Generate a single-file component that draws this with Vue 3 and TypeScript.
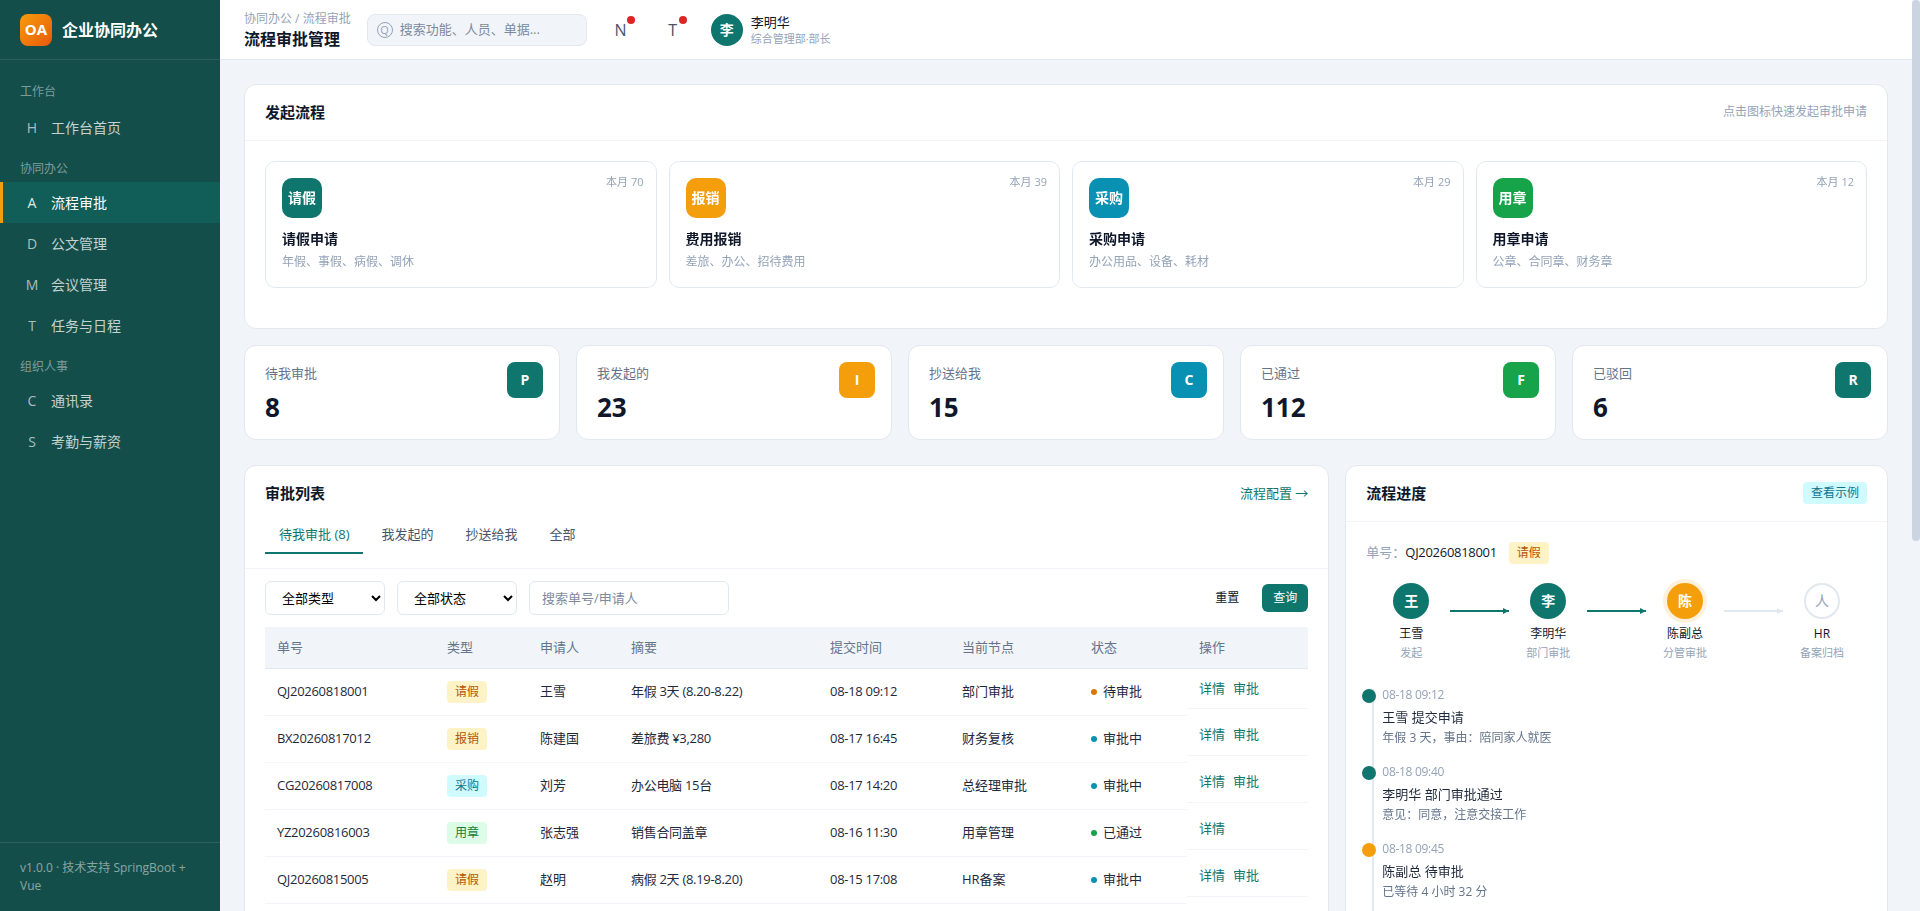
<script setup lang="ts">
import { ref } from 'vue'

type NavItem = { key: string; label: string; active?: boolean }
type NavGroup = { title: string; items: NavItem[] }
type Tone = 'amber' | 'cyan' | 'green'
type Row = {
  no: string
  type: string
  tone: Tone
  applicant: string
  summary: string
  time: string
  node: string
  status: string
  dot: 'pending' | 'running' | 'done'
  canApprove: boolean
}

const navGroups: NavGroup[] = [
  { title: '工作台', items: [{ key: 'H', label: '工作台首页' }] },
  {
    title: '协同办公',
    items: [
      { key: 'A', label: '流程审批', active: true },
      { key: 'D', label: '公文管理' },
      { key: 'M', label: '会议管理' },
      { key: 'T', label: '任务与日程' },
    ],
  },
  {
    title: '组织人事',
    items: [
      { key: 'C', label: '通讯录' },
      { key: 'S', label: '考勤与薪资' },
    ],
  },
]

const quickStarts = [
  { icon: '请假', color: 'teal', title: '请假申请', desc: '年假、事假、病假、调休', count: 70 },
  { icon: '报销', color: 'orange', title: '费用报销', desc: '差旅、办公、招待费用', count: 39 },
  { icon: '采购', color: 'blue', title: '采购申请', desc: '办公用品、设备、耗材', count: 29 },
  { icon: '用章', color: 'green', title: '用章申请', desc: '公章、合同章、财务章', count: 12 },
]

const stats = [
  { label: '待我审批', value: 8, icon: 'P', color: 'teal' },
  { label: '我发起的', value: 23, icon: 'I', color: 'orange' },
  { label: '抄送给我', value: 15, icon: 'C', color: 'blue' },
  { label: '已通过', value: 112, icon: 'F', color: 'green' },
  { label: '已驳回', value: 6, icon: 'R', color: 'teal' },
]

const tabs = ['待我审批 (8)', '我发起的', '抄送给我', '全部']
const activeTab = ref(0)

const rows: Row[] = [
  { no: 'QJ20260818001', type: '请假', tone: 'amber', applicant: '王雪', summary: '年假 3天 (8.20-8.22)', time: '08-18 09:12', node: '部门审批', status: '待审批', dot: 'pending', canApprove: true },
  { no: 'BX20260817012', type: '报销', tone: 'amber', applicant: '陈建国', summary: '差旅费 ¥3,280', time: '08-17 16:45', node: '财务复核', status: '审批中', dot: 'running', canApprove: true },
  { no: 'CG20260817008', type: '采购', tone: 'cyan', applicant: '刘芳', summary: '办公电脑 15台', time: '08-17 14:20', node: '总经理审批', status: '审批中', dot: 'running', canApprove: true },
  { no: 'YZ20260816003', type: '用章', tone: 'green', applicant: '张志强', summary: '销售合同盖章', time: '08-16 11:30', node: '用章管理', status: '已通过', dot: 'done', canApprove: false },
  { no: 'QJ20260815005', type: '请假', tone: 'amber', applicant: '赵明', summary: '病假 2天 (8.19-8.20)', time: '08-15 17:08', node: 'HR备案', status: '审批中', dot: 'running', canApprove: true },
  { no: 'BX20260815002', type: '报销', tone: 'amber', applicant: '孙丽', summary: '招待费 ¥1,460', time: '08-15 10:26', node: '部门审批', status: '待审批', dot: 'pending', canApprove: true },
  { no: 'CG20260814011', type: '采购', tone: 'cyan', applicant: '周杰', summary: '打印耗材 30件', time: '08-14 15:40', node: '行政复核', status: '审批中', dot: 'running', canApprove: true },
  { no: 'YZ20260814006', type: '用章', tone: 'green', applicant: '吴敏', summary: '采购合同盖章', time: '08-14 09:18', node: '用章管理', status: '已通过', dot: 'done', canApprove: false },
]

const flowNodes = [
  { mark: '王', name: '王雪', role: '发起', state: 'done' },
  { mark: '李', name: '李明华', role: '部门审批', state: 'done' },
  { mark: '陈', name: '陈副总', role: '分管审批', state: 'current' },
  { mark: '人', name: 'HR', role: '备案归档', state: 'todo' },
]

const timeline = [
  { time: '08-18 09:12', title: '王雪 提交申请', desc: '年假 3 天，事由：陪同家人就医', state: 'done' },
  { time: '08-18 09:40', title: '李明华 部门审批通过', desc: '意见：同意，注意交接工作', state: 'done' },
  { time: '08-18 09:45', title: '陈副总 待审批', desc: '已等待 4 小时 32 分', state: 'current' },
  { time: '待处理', title: 'HR 备案归档', desc: '等待上一节点完成', state: 'todo' },
]
</script>

<template>
  <div class="viewport">
    <div class="layout">
      <aside class="sidebar">
        <div class="brand">
          <span class="brand-logo">OA</span>
          <span class="brand-name">企业协同办公</span>
        </div>
        <nav class="nav">
          <template v-for="group in navGroups" :key="group.title">
            <div class="nav-title">{{ group.title }}</div>
            <a
              v-for="item in group.items"
              :key="item.key"
              class="nav-item"
              :class="{ active: item.active }"
            >
              <span class="nav-key">{{ item.key }}</span>
              <span>{{ item.label }}</span>
            </a>
          </template>
        </nav>
        <div class="sidebar-foot">v1.0.0 · 技术支持 SpringBoot + Vue</div>
      </aside>

      <div class="main">
        <header class="topbar">
          <div class="page-title">
            <div class="crumb">协同办公 / 流程审批</div>
            <h1>流程审批管理</h1>
          </div>
          <label class="search">
            <span class="search-icon">Q</span>
            <input type="text" placeholder="搜索功能、人员、单据..." />
          </label>
          <button class="icon-btn" type="button">N<i class="red-dot"></i></button>
          <button class="icon-btn" type="button">T<i class="red-dot"></i></button>
          <div class="user">
            <span class="avatar">李</span>
            <div>
              <div class="user-name">李明华</div>
              <div class="user-role">综合管理部·部长</div>
            </div>
          </div>
        </header>

        <main class="content">
          <section class="card">
            <div class="card-head">
              <h2>发起流程</h2>
              <span class="hint">点击图标快速发起审批申请</span>
            </div>
            <div class="quick-grid">
              <div v-for="q in quickStarts" :key="q.title" class="quick">
                <span class="quick-count">本月 {{ q.count }}</span>
                <span class="quick-icon" :class="q.color">{{ q.icon }}</span>
                <div class="quick-title">{{ q.title }}</div>
                <div class="quick-desc">{{ q.desc }}</div>
              </div>
            </div>
          </section>

          <section class="stats">
            <div v-for="s in stats" :key="s.label" class="stat">
              <div>
                <div class="stat-label">{{ s.label }}</div>
                <div class="stat-value">{{ s.value }}</div>
              </div>
              <span class="stat-icon" :class="s.color">{{ s.icon }}</span>
            </div>
          </section>

          <div class="columns">
            <section class="card">
              <div class="list-head">
                <div class="list-title">
                  <h2>审批列表</h2>
                  <a class="link">流程配置 →</a>
                </div>
                <div class="tabs">
                  <button
                    v-for="(tab, i) in tabs"
                    :key="tab"
                    class="tab"
                    :class="{ active: activeTab === i }"
                    type="button"
                    @click="activeTab = i"
                  >
                    {{ tab }}
                  </button>
                </div>
              </div>

              <div class="list-body">
                <div class="filters">
                  <select class="select">
                    <option>全部类型</option>
                    <option>请假</option>
                    <option>报销</option>
                  </select>
                  <select class="select">
                    <option>全部状态</option>
                    <option>待审批</option>
                    <option>审批中</option>
                  </select>
                  <input class="filter-input" type="text" placeholder="搜索单号/申请人" />
                  <span class="spacer"></span>
                  <button class="btn" type="button">重置</button>
                  <button class="btn primary" type="button">查询</button>
                </div>

                <table class="table">
                  <colgroup>
                    <col class="c-no" />
                    <col class="c-type" />
                    <col class="c-user" />
                    <col class="c-sum" />
                    <col class="c-time" />
                    <col class="c-node" />
                    <col class="c-status" />
                    <col class="c-act" />
                  </colgroup>
                  <thead>
                    <tr>
                      <th>单号</th>
                      <th>类型</th>
                      <th>申请人</th>
                      <th>摘要</th>
                      <th>提交时间</th>
                      <th>当前节点</th>
                      <th>状态</th>
                      <th>操作</th>
                    </tr>
                  </thead>
                  <tbody>
                    <tr v-for="row in rows" :key="row.no">
                      <td class="tight">{{ row.no }}</td>
                      <td><span class="tag" :class="row.tone">{{ row.type }}</span></td>
                      <td>{{ row.applicant }}</td>
                      <td class="tight">{{ row.summary }}</td>
                      <td class="tight">{{ row.time }}</td>
                      <td>{{ row.node }}</td>
                      <td><i class="dot" :class="row.dot"></i>{{ row.status }}</td>
                      <td class="actions">
                        <a>详情</a>
                        <a v-if="row.canApprove">审批</a>
                      </td>
                    </tr>
                  </tbody>
                </table>
              </div>
            </section>

            <section class="card">
              <div class="card-head">
                <h2>流程进度</h2>
                <button class="sample" type="button">查看示例</button>
              </div>
              <div class="progress">
                <div class="order">
                  <span class="order-label">单号：</span>
                  <span class="tight">QJ20260818001</span>
                  <span class="tag amber">请假</span>
                </div>

                <div class="flow">
                  <template v-for="(node, i) in flowNodes" :key="node.name">
                    <div class="flow-node">
                      <span class="flow-mark" :class="node.state">{{ node.mark }}</span>
                      <div class="flow-name">{{ node.name }}</div>
                      <div class="flow-role">{{ node.role }}</div>
                    </div>
                    <span
                      v-if="i < flowNodes.length - 1"
                      class="flow-line"
                      :class="{ off: node.state === 'current' }"
                    ></span>
                  </template>
                </div>

                <ul class="timeline">
                  <li v-for="item in timeline" :key="item.title" class="tl-item">
                    <i class="tl-dot" :class="item.state"></i>
                    <div class="tl-time">{{ item.time }}</div>
                    <div class="tl-title">{{ item.title }}</div>
                    <div class="tl-desc">{{ item.desc }}</div>
                  </li>
                </ul>
              </div>
            </section>
          </div>
        </main>
      </div>
    </div>

    <!-- the browser hides native scrollbars here, so the bar is drawn -->
    <div class="scroll-rail"><div class="scroll-thumb"></div></div>
  </div>
</template>

<style scoped>
* {
  box-sizing: border-box;
}

.viewport {
  display: flex;
  height: 100vh;
  overflow: hidden;
  background: #f1f5f9;
}

.scroll-rail {
  flex: 0 0 8px;
  background: #f1f5f9;
}

.scroll-thumb {
  height: 541px;
  border-radius: 4px;
  background: #cbd5e1;
}

.layout {
  display: flex;
  align-items: flex-start;
  flex: 1;
  min-width: 0;
  height: 100vh;
  overflow-y: auto;
  scrollbar-width: none;
  color: #0f172a;
  font-family: 'Open Sans', 'Noto Sans CJK SC', sans-serif;
  font-size: 13px;
  line-height: 1.5;
}

.sidebar {
  position: sticky;
  top: 0;
  display: flex;
  flex-direction: column;
  flex: 0 0 220px;
  height: 100vh;
  background: #134e4a;
}

.brand {
  display: flex;
  align-items: center;
  gap: 10px;
  height: 60px;
  padding: 0 20px;
  border-bottom: 1px solid rgba(255, 255, 255, 0.1);
}

.brand-logo {
  display: flex;
  align-items: center;
  justify-content: center;
  width: 32px;
  height: 32px;
  border-radius: 8px;
  background: linear-gradient(135deg, #f59e0b, #ea580c);
  color: #fff;
  font-size: 15px;
  font-weight: 700;
}

.brand-name {
  color: #fff;
  font-size: 16px;
  font-weight: 700;
}

.nav {
  flex: 1;
  padding-top: 4px;
}

.nav-title {
  padding: 19px 20px 6px;
  color: rgba(255, 255, 255, 0.45);
  font-size: 12px;
}

.nav-item + .nav-title {
  padding: 12px 20px 4px;
}

.nav-item {
  display: flex;
  align-items: center;
  gap: 10px;
  height: 41px;
  padding: 0 20px;
  border-left: 3px solid transparent;
  color: rgba(255, 255, 255, 0.75);
  font-size: 14px;
}

.nav-item.active {
  border-left-color: #f59e0b;
  background: #115e59;
  color: #fff;
}

.nav-key {
  width: 18px;
  opacity: 0.85;
  text-align: center;
  font-weight: 500;
}

.sidebar-foot {
  padding: 16px 20px;
  border-top: 1px solid rgba(255, 255, 255, 0.1);
  color: rgba(255, 255, 255, 0.5);
  font-size: 12px;
}

.main {
  flex: 1;
  min-width: 0;
  min-height: 1534px;
}

.topbar {
  position: sticky;
  top: 0;
  z-index: 5;
  display: flex;
  align-items: center;
  gap: 16px;
  height: 60px;
  padding: 0 24px;
  border-bottom: 1px solid #e2e8f0;
  background: #fff;
}

.crumb {
  color: #94a3b8;
  font-size: 12px;
}

h1 {
  margin: 0;
  font-size: 16px;
  font-weight: 700;
  line-height: 22px;
}

.search {
  display: flex;
  align-items: center;
  gap: 7px;
  width: 220px;
  height: 32px;
  padding: 0 9px;
  border: 1px solid #e2e8f0;
  border-radius: 8px;
  background: #f1f5f9;
}

.search-icon {
  display: flex;
  align-items: center;
  justify-content: center;
  flex: none;
  width: 16px;
  height: 16px;
  border: 1px solid #94a3b8;
  border-radius: 50%;
  color: #94a3b8;
  font-size: 11px;
  line-height: 1;
}

.search input {
  flex: 1;
  min-width: 0;
  padding: 0;
  border: 0;
  outline: 0;
  background: transparent;
  font: inherit;
}

.search input::placeholder,
.filter-input::placeholder {
  color: #7d8a9c;
}

.icon-btn {
  position: relative;
  width: 36px;
  height: 36px;
  padding: 0;
  border: 0;
  background: transparent;
  color: #475569;
  font-family: inherit;
  font-size: 16px;
}

.red-dot {
  position: absolute;
  top: 4px;
  right: 4px;
  width: 8px;
  height: 8px;
  border-radius: 50%;
  background: #dc2626;
}

.user {
  display: flex;
  align-items: center;
  gap: 8px;
  margin-left: 4px;
}

.avatar {
  display: flex;
  align-items: center;
  justify-content: center;
  width: 32px;
  height: 32px;
  border-radius: 50%;
  background: #0f766e;
  color: #fff;
  font-size: 14px;
  font-weight: 700;
}

.user-name {
  font-size: 13px;
  line-height: 18px;
}

.user-role {
  color: #94a3b8;
  font-size: 11px;
  line-height: 16px;
}

.content {
  display: grid;
  gap: 16px;
  padding: 24px;
}

.card {
  min-width: 0;
  align-self: start;
  border: 1px solid #e2e8f0;
  border-radius: 12px;
  background: #fff;
}

.card-head {
  display: flex;
  align-items: center;
  justify-content: space-between;
  padding: 16px 20px;
  border-bottom: 1px solid #f1f5f9;
}

h2 {
  margin: 0;
  font-size: 15px;
  font-weight: 700;
}

.hint {
  color: #94a3b8;
  font-size: 12px;
}

.quick-grid {
  display: grid;
  grid-template-columns: repeat(4, 1fr);
  gap: 12px;
  padding: 20px 20px 40px;
}

.quick {
  position: relative;
  padding: 16px;
  border: 1px solid #e2e8f0;
  border-radius: 10px;
}

.quick-count {
  position: absolute;
  top: 12px;
  right: 12px;
  color: #94a3b8;
  font-size: 11px;
}

.quick-icon {
  display: flex;
  align-items: center;
  justify-content: center;
  width: 40px;
  height: 40px;
  border-radius: 10px;
  color: #fff;
  font-size: 14px;
  font-weight: 700;
}

.teal {
  background: #0f766e;
}

.orange {
  background: #f59e0b;
}

.blue {
  background: #0891b2;
}

.green {
  background: #16a34a;
}

.quick-title {
  margin-top: 10px;
  font-size: 14px;
  font-weight: 700;
}

.quick-desc {
  margin-top: 4px;
  color: #94a3b8;
  font-size: 12px;
}

.stats {
  display: grid;
  grid-template-columns: repeat(5, 1fr);
  gap: 16px;
}

.stat {
  display: flex;
  align-items: flex-start;
  justify-content: space-between;
  padding: 16px 16px 15px 20px;
  border: 1px solid #e2e8f0;
  border-radius: 12px;
  background: #fff;
}

.stat-label {
  margin-top: 2px;
  color: #64748b;
  font-size: 13px;
}

.stat-value {
  margin-top: 7px;
  font-size: 26px;
  font-weight: 700;
  line-height: 34px;
}

.stat-icon {
  display: flex;
  align-items: center;
  justify-content: center;
  width: 36px;
  height: 36px;
  border-radius: 8px;
  color: #fff;
  font-size: 14px;
  font-weight: 700;
}

.columns {
  display: grid;
  grid-template-columns: 2fr 1fr;
  gap: 16px;
  padding-top: 9px;
}

.list-head {
  padding: 16px 20px 14px;
  border-bottom: 1px solid #f1f5f9;
}

.list-title {
  display: flex;
  align-items: center;
  justify-content: space-between;
}

.link {
  color: #0f766e;
  font-size: 13px;
}

.tabs {
  display: flex;
  gap: 4px;
  margin-top: 12px;
}

.tab {
  padding: 8px 14px;
  border: 0;
  border-bottom: 2px solid transparent;
  background: transparent;
  color: #475569;
  font: inherit;
  font-size: 13px;
}

.tab.active {
  border-bottom-color: #0f766e;
  color: #0f766e;
}

.list-body {
  padding: 12px 20px 20px;
}

.filters {
  display: flex;
  align-items: center;
  gap: 12px;
  margin-bottom: 12px;
}

.select {
  width: 120px;
  height: 34px;
  padding: 0 12px;
  border: 1px solid #e2e8f0;
  border-radius: 6px;
  background: #fff;
  font: inherit;
}

.filter-input {
  width: 200px;
  height: 34px;
  padding: 0 12px;
  border: 1px solid #e2e8f0;
  border-radius: 6px;
  outline: 0;
  font: inherit;
}

.spacer {
  flex: 1;
}

.btn {
  width: 46px;
  height: 28px;
  padding: 0;
  border: 0;
  border-radius: 6px;
  background: transparent;
  color: #0f172a;
  font: inherit;
  font-size: 12px;
}

.btn.primary {
  background: #0f766e;
  color: #fff;
}

.table {
  width: 100%;
  border-collapse: collapse;
  table-layout: fixed;
}

.c-no { width: 170px; }
.c-type { width: 93px; }
.c-user { width: 91px; }
.c-sum { width: 199px; }
.c-time { width: 132px; }
.c-node { width: 129px; }
.c-status { width: 108px; }

th {
  height: 41px;
  padding: 10px 12px;
  border-bottom: 1px solid #e2e8f0;
  background: #f1f5f9;
  color: #64748b;
  font-size: 13px;
  font-weight: 400;
  text-align: left;
}

td {
  padding: 12px;
  border-bottom: 1px solid #f1f5f9;
  color: #1e293b;
  white-space: nowrap;
}

.tight {
  letter-spacing: -0.3px;
}

.tag {
  display: inline-block;
  padding: 2px 8px;
  border-radius: 4px;
  font-size: 12px;
}

.tag.amber {
  background: #fef3c7;
  color: #b45309;
}

.tag.cyan {
  background: #cffafe;
  color: #0e7490;
}

.tag.green {
  background: #dcfce7;
  color: #15803d;
}

.dot {
  display: inline-block;
  width: 6px;
  height: 6px;
  margin-right: 6px;
  border-radius: 50%;
  vertical-align: middle;
}

.dot.pending {
  background: #d97706;
}

.dot.running {
  background: #0891b2;
}

.dot.done {
  background: #16a34a;
}

.actions {
  display: flex;
  gap: 8px;
  padding: 10px 12px;
  color: #0f766e;
}

.sample {
  width: 64px;
  height: 22px;
  padding: 0;
  border: 0;
  border-radius: 4px;
  background: #cffafe;
  color: #0e7490;
  font: inherit;
  font-size: 12px;
}

.progress {
  padding: 20px;
}

.order {
  display: flex;
  align-items: center;
}

.order-label {
  color: #94a3b8;
}

.order .tag {
  margin-left: 12px;
}

.flow {
  display: flex;
  margin-top: 19px;
}

.flow-node {
  flex: 0 0 90px;
  text-align: center;
}

.flow-mark {
  display: flex;
  align-items: center;
  justify-content: center;
  width: 36px;
  height: 36px;
  margin: 0 auto;
  border-radius: 50%;
  color: #fff;
  font-size: 14px;
  font-weight: 700;
}

.flow-mark.done {
  background: #0f766e;
}

.flow-mark.current {
  background: #f59e0b;
  box-shadow: 0 0 0 4px rgba(245, 158, 11, 0.15);
}

.flow-mark.todo {
  border: 2px solid #e2e8f0;
  color: #94a3b8;
  font-weight: 400;
}

.flow-name {
  margin-top: 6px;
  font-size: 12px;
}

.flow-role {
  margin-top: 2px;
  color: #94a3b8;
  font-size: 11px;
}

.flow-line {
  position: relative;
  flex: 1;
  height: 2px;
  margin: 27px -6px 0;
  background: #0f766e;
}

.flow-line::after {
  content: '';
  position: absolute;
  top: -2px;
  right: 0;
  border-top: 3px solid transparent;
  border-bottom: 3px solid transparent;
  border-left: 6px solid #0f766e;
}

.flow-line.off {
  background: #e2e8f0;
}

.flow-line.off::after {
  border-left-color: #e2e8f0;
}

.timeline {
  margin: 25px 0 0;
  padding: 0;
  list-style: none;
}

.tl-item {
  position: relative;
  padding: 0 0 16px 16px;
}

.tl-item::before {
  content: '';
  position: absolute;
  top: 3px;
  bottom: -3px;
  left: 6px;
  width: 2px;
  background: #e2e8f0;
}

.tl-item:last-child::before {
  display: none;
}

.tl-dot {
  position: absolute;
  top: 3px;
  left: -4px;
  z-index: 1;
  width: 14px;
  height: 14px;
  border-radius: 50%;
}

.tl-dot.done {
  background: #0f766e;
}

.tl-dot.current {
  background: #f59e0b;
}

.tl-dot.todo {
  background: #e2e8f0;
}

.tl-time {
  color: #94a3b8;
  font-size: 12px;
  letter-spacing: -0.3px;
}

.tl-title {
  margin-top: 4px;
  color: #1e293b;
  font-size: 13px;
}

.tl-desc {
  margin-top: 1.5px;
  color: #64748b;
  font-size: 12px;
}
</style>
